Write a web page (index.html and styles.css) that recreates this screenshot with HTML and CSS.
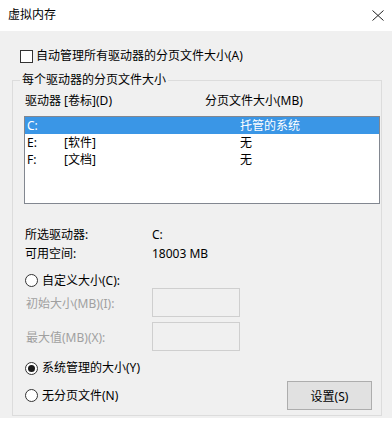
FILE: index.html
```html
<!DOCTYPE html>
<html lang="zh-CN">
<head>
<meta charset="utf-8">
<title>虚拟内存</title>
<link rel="stylesheet" href="styles.css">
</head>
<body>
<div class="titlebar">
  <span class="title">虚拟内存</span>
  <svg class="close" width="12" height="11" viewBox="0 0 12 11"><path d="M0.5 0.5 L11.5 10.5 M11.5 0.5 L0.5 10.5" stroke="#222" stroke-width="1" fill="none"/></svg>
</div>
<div class="dialog">
  <div class="check-row"><span class="checkbox"></span><span>自动管理所有驱动器的分页文件大小(A)</span></div>
  <fieldset class="group">
    <legend>每个驱动器的分页文件大小</legend>
    <div class="group-body">
      <div class="list-head"><span class="head-drive">驱动器 [卷标](D)</span><span>分页文件大小(MB)</span></div>
      <div class="listbox">
        <div class="row selected"><span class="c1">C:</span><span class="c2"></span><span class="c3">托管的系统</span></div>
        <div class="row"><span class="c1">E:</span><span class="c2">[软件]</span><span class="c3">无</span></div>
        <div class="row"><span class="c1">F:</span><span class="c2">[文档]</span><span class="c3">无</span></div>
      </div>
      <div class="info first"><span class="info-label">所选驱动器:</span><span>C:</span></div>
      <div class="info"><span class="info-label">可用空间:</span><span>18003 MB</span></div>
      <div class="radio-row custom"><span class="radio"></span><span>自定义大小(C):</span></div>
      <div class="field-row"><span class="field-label">初始大小(MB)(I):</span><span class="input"></span></div>
      <div class="field-row second"><span class="field-label">最大值(MB)(X):</span><span class="input"></span></div>
      <div class="radio-row sys"><span class="radio checked"></span><span>系统管理的大小(Y)</span></div>
      <div class="last-row">
        <div class="radio-row"><span class="radio"></span><span>无分页文件(N)</span></div>
        <button class="btn">设置(S)</button>
      </div>
    </div>
  </fieldset>
</div>
</body>
</html>
```

FILE: styles.css
```css
html, body {
  margin: 0;
  padding: 0;
  background: #ffffff;
}
body {
  width: 392px;
  height: 424px;
  overflow: hidden;
  font-family: "Noto Sans", "Noto Sans CJK SC", sans-serif;
  font-size: 12px;
  color: #000;
}
.titlebar {
  height: 31px;
  display: flex;
  align-items: center;
  justify-content: space-between;
  padding: 0 8px 0 8px;
  box-sizing: border-box;
  background: #fff;
}
.title {
  line-height: 16px;
  margin-top: -1px;
}
.close {
  display: block;
  margin-top: -1px;
}
.dialog {
  background: #f0f0f0;
  height: 387px;
  box-sizing: border-box;
  padding: 17px 0 0 12px;
  overflow: hidden;
}
.check-row {
  display: flex;
  align-items: center;
  height: 16px;
  line-height: 16px;
  margin-left: 8px;
  gap: 3px;
}
.checkbox {
  width: 13px;
  height: 13px;
  box-sizing: border-box;
  border: 1px solid #333;
  background: #fff;
  flex: none;
}
.group {
  margin: 8px 0 0 0;
  padding: 0;
  width: 370px;
  box-sizing: border-box;
  border: 1px solid #dcdcdc;
  min-inline-size: 0;
}
.group legend {
  margin-left: 7px;
  padding: 0 2px;
  line-height: 16px;
  height: 16px;
}
.group-body {
  padding: 5px 1px 5px 11px;
}
.list-head {
  display: flex;
  height: 16px;
  line-height: 16px;
  padding-left: 1px;
}
.head-drive {
  width: 180px;
}
.listbox {
  margin-top: 7px;
  width: 356px;
  height: 88px;
  box-sizing: border-box;
  border: 1px solid #828790;
  background: #fff;
}
.row {
  display: flex;
  height: 17px;
  line-height: 17px;
  padding-left: 2px;
}
.row.selected {
  background: #3a96e6;
  color: #fff;
}
.c1 { width: 37px; }
.c2 { width: 176px; }
.info {
  display: flex;
  height: 19px;
  line-height: 19px;
  padding-left: 1px;
}
.info.first {
  margin-top: 21px;
}
.info-label {
  width: 127px;
}
.radio-row {
  display: flex;
  align-items: center;
  gap: 4px;
  height: 16px;
  line-height: 16px;
  padding-left: 1px;
}
.radio-row.custom {
  margin-top: 10px;
  height: 15px;
}
.radio {
  width: 13px;
  height: 13px;
  box-sizing: border-box;
  border: 1px solid #333;
  border-radius: 50%;
  background: #fff;
  flex: none;
  display: flex;
  align-items: center;
  justify-content: center;
}
.radio.checked::after {
  content: "";
  width: 7px;
  height: 7px;
  border-radius: 50%;
  background: #1a1a1a;
}
.field-row {
  display: flex;
  align-items: center;
  height: 29px;
  color: #a0a0a0;
}
.field-row.second {
  margin-top: 5px;
}
.field-label {
  width: 126px;
  padding-left: 2px;
}
.input {
  width: 88px;
  height: 29px;
  box-sizing: border-box;
  border: 1px solid #cfcfcf;
  background: #f0f0f0;
}
.radio-row.sys {
  margin-top: 9px;
}
.last-row {
  display: flex;
  align-items: center;
  justify-content: space-between;
  height: 29px;
  margin-top: 5px;
}
.btn {
  width: 85px;
  height: 29px;
  margin-right: 8px;
  box-sizing: border-box;
  border: 1px solid #adadad;
  background: #e1e1e1;
  font-family: "Noto Sans", "Noto Sans CJK SC", sans-serif;
  font-size: 12px;
  color: #000;
  padding: 0;
}
```
